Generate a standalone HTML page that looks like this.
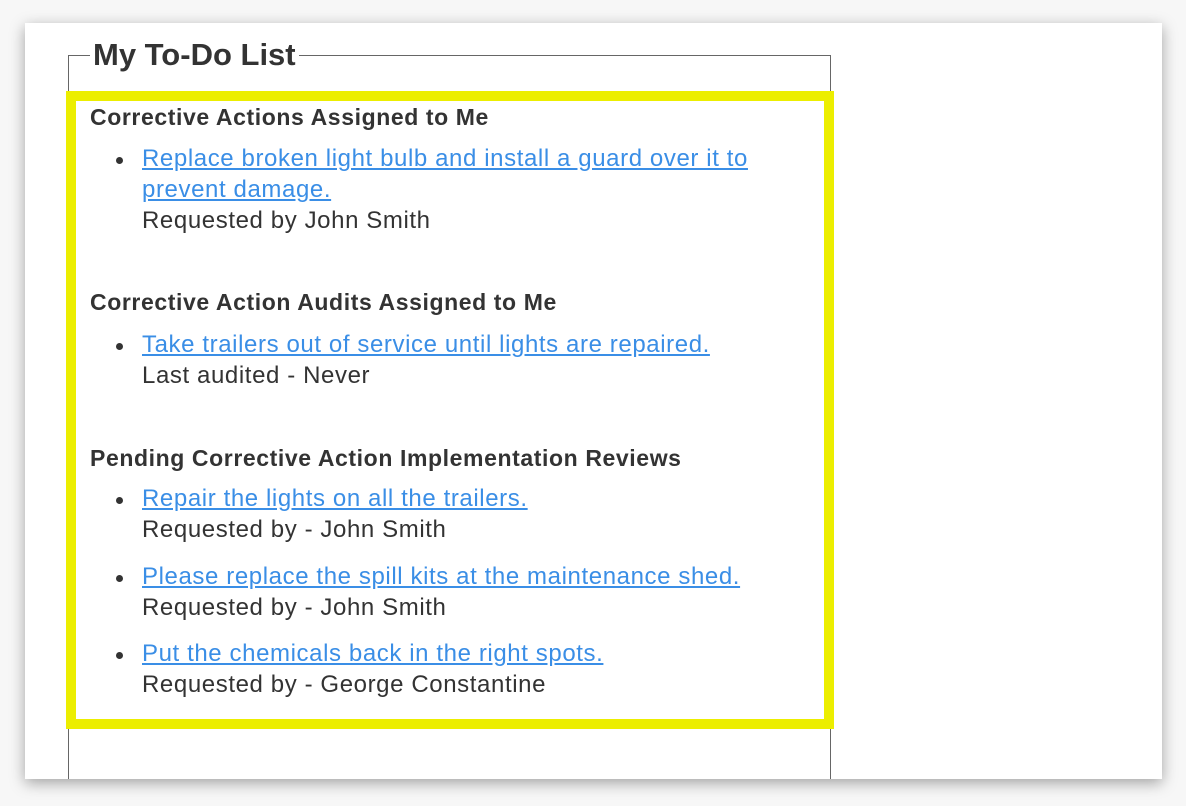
<!DOCTYPE html>
<html><head><style>
body{margin:0;width:1186px;height:806px;background:#f7f7f7;position:relative;overflow:hidden;font-family:"Liberation Sans",sans-serif;color:#333}
.card{position:absolute;left:25px;top:23px;width:1137px;height:756px;background:#fff;box-shadow:0 4px 14px rgba(0,0,0,.35);overflow:hidden}
.fs{position:absolute;left:43px;top:32px;width:761px;height:740px;border:1px solid #666;border-bottom:none}
.legend{position:absolute;left:90px;top:37px;background:#fff;padding:0 3px;font-weight:bold;font-size:31px;color:#333}
.yb{position:absolute;left:66px;top:91px;width:748px;height:618px;border:10px solid #ecee00;background:#fff}
.t{position:absolute;white-space:nowrap;font-size:24px;letter-spacing:0.6px}
.h{font-weight:bold;font-size:23px;letter-spacing:0.6px}
a{color:#3a8ee6;text-decoration:underline}
.b{position:absolute;width:7px;height:7px;border-radius:50%;background:#333;left:116px}
</style></head><body>
<div class="card"><div class="fs"></div></div>
<div class="legend">My To-Do List</div>
<div class="yb"></div>
<div class="t h" style="left:90px;top:104px">Corrective Actions Assigned to Me</div>
<div class="b" style="top:157px"></div>
<div class="t" style="left:142px;top:145px"><a>Replace broken light bulb and install a guard over it to</a></div>
<div class="t" style="left:142px;top:176px"><a>prevent damage.</a></div>
<div class="t" style="left:142px;top:207px">Requested by John Smith</div>
<div class="t h" style="left:90px;top:289px">Corrective Action Audits Assigned to Me</div>
<div class="b" style="top:343px"></div>
<div class="t" style="left:142px;top:331px"><a>Take trailers out of service until lights are repaired.</a></div>
<div class="t" style="left:142px;top:362px">Last audited - Never</div>
<div class="t h" style="left:90px;top:445px">Pending Corrective Action Implementation Reviews</div>
<div class="b" style="top:497px"></div>
<div class="t" style="left:142px;top:485px"><a>Repair the lights on all the trailers.</a></div>
<div class="t" style="left:142px;top:516px">Requested by - John Smith</div>
<div class="b" style="top:575px"></div>
<div class="t" style="left:142px;top:563px"><a>Please replace the spill kits at the maintenance shed.</a></div>
<div class="t" style="left:142px;top:594px">Requested by - John Smith</div>
<div class="b" style="top:652px"></div>
<div class="t" style="left:142px;top:640px"><a>Put the chemicals back in the right spots.</a></div>
<div class="t" style="left:142px;top:671px">Requested by - George Constantine</div>
</body></html>
